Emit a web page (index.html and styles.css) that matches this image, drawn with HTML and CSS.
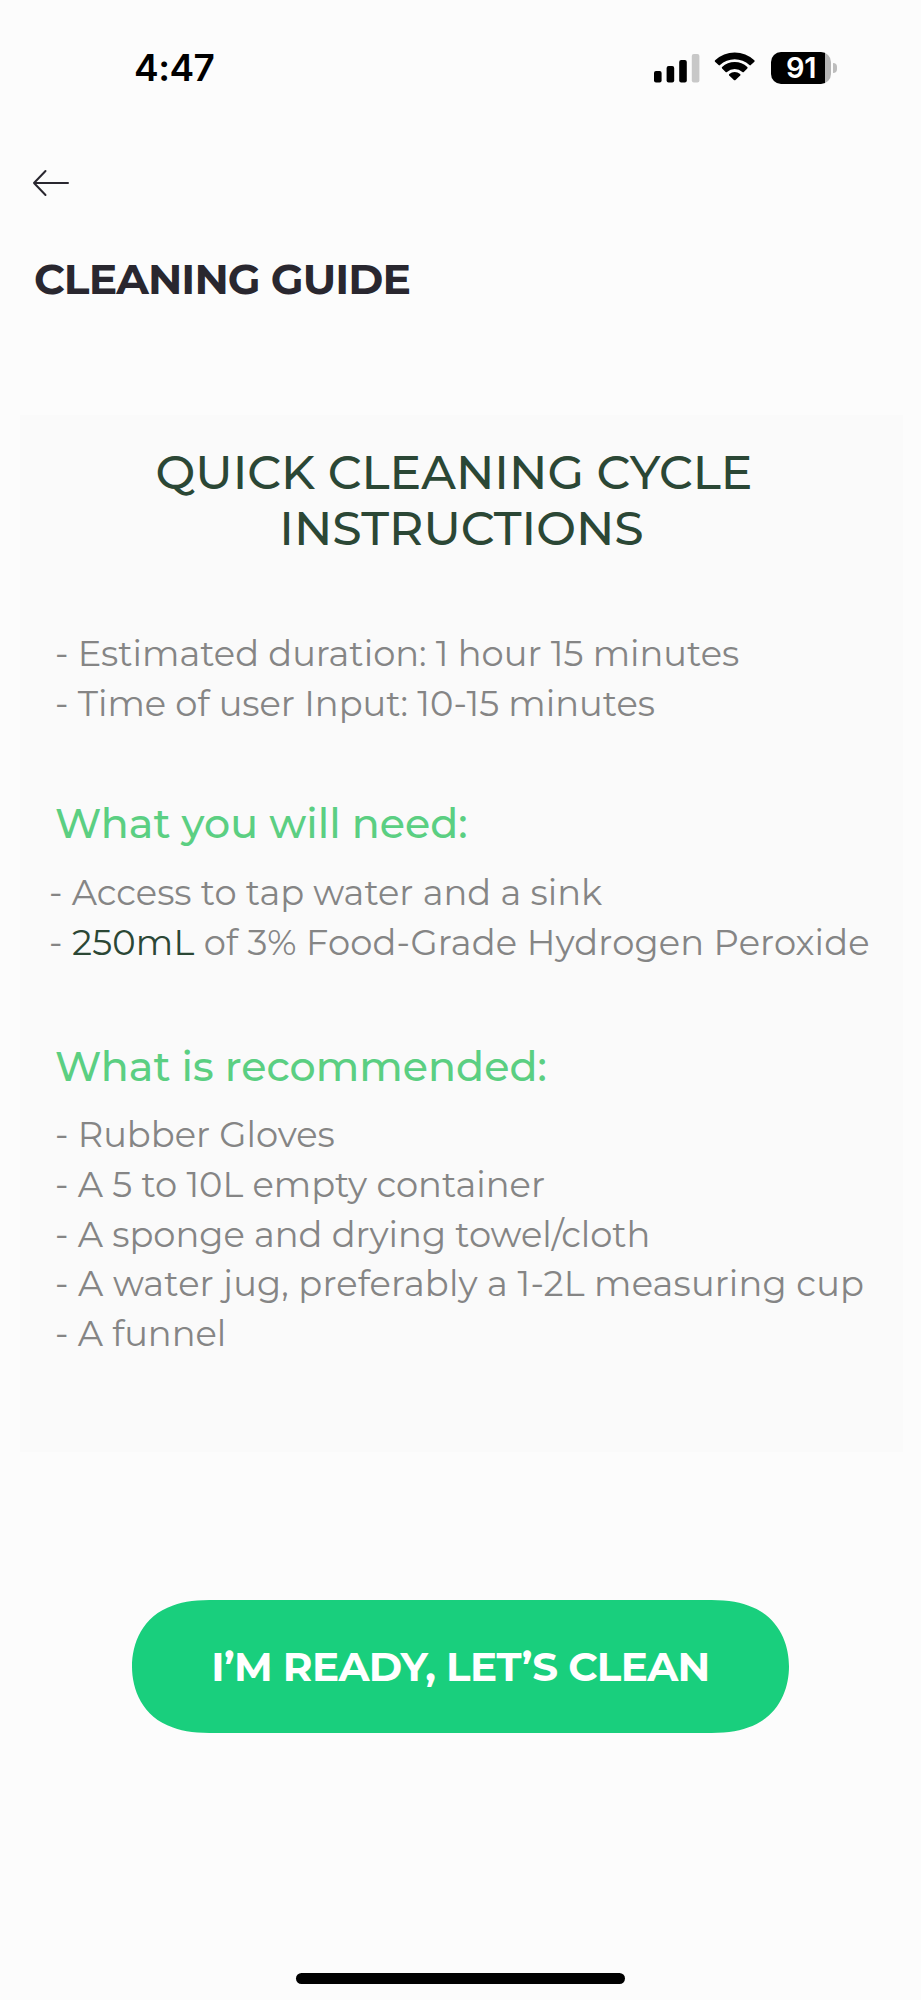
FILE: index.html
```html
<!DOCTYPE html>
<html lang="en">
<head>
    <meta charset="UTF-8">
    <meta name="viewport" content="width=device-width, initial-scale=1.0">
    <title>Cleaning Guide</title>
    <link rel="stylesheet" href="styles.css">
</head>
<body>

<div class="status-bar">
    <span class="time">4:47</span>
    <div class="status-icons">
        <svg class="signal" width="46" height="30" viewBox="0 0 46 30">
            <rect x="0" y="18" width="7.6" height="11.5" rx="2"/>
            <rect x="12.6" y="13" width="7.6" height="16.5" rx="2"/>
            <rect x="25.2" y="7" width="7.6" height="22.5" rx="2"/>
            <rect x="37.8" y="1" width="7.6" height="28.5" rx="2" fill="#c8c8c8"/>
        </svg>
        <svg class="wifi" width="42" height="31" viewBox="0 0 42 31">
            <path d="M1 9.7 Q0.4 9 1.1 8.3 A28.6 28.6 0 0 1 40.3 8.3 Q41 9 40.4 9.7 L36.8 13.1 Q36.1 13.7 35.4 13.1 A21.5 21.5 0 0 0 6 13.1 Q5.3 13.7 4.6 13.1 Z"/>
            <path d="M8.1 16.5 Q7.4 15.8 8.1 15.1 A18.4 18.4 0 0 1 33.3 15.1 Q34 15.8 33.3 16.5 L29.8 19.9 Q29.1 20.5 28.4 19.9 A11.6 11.6 0 0 0 13 19.9 Q12.3 20.5 11.6 19.9 Z"/>
            <path d="M15.2 23.4 Q14.5 22.7 15.3 22 A8.4 8.4 0 0 1 26.1 22 Q26.9 22.7 26.2 23.4 L21.5 28 Q20.7 28.7 19.9 28 Z"/>
        </svg>
        <div class="battery">
            <div class="battery-body">91</div>
            <div class="battery-cap"></div>
        </div>
    </div>
</div>

<header>
    <a href="#" class="back">
        <svg width="38" height="28" viewBox="0 0 38 28" fill="none" stroke="#29272f" stroke-width="2" stroke-linecap="round" stroke-linejoin="round">
            <path d="M36 14H2M13.5 2L2 14L13.5 26"/>
        </svg>
    </a>
    <h1>CLEANING GUIDE</h1>
</header>

<main class="card">
    <h2><span class="first-line">QUICK CLEANING CYCLE</span><br>INSTRUCTIONS</h2>

    <ul class="summary">
        <li>- Estimated duration: 1 hour 15 minutes</li>
        <li>- Time of user Input: 10-15 minutes</li>
    </ul>

    <h3 class="need-title">What you will need:</h3>
    <ul class="need">
        <li>- Access to tap water and a sink</li>
        <li class="wide">- <strong>250mL</strong> of 3% Food-Grade Hydrogen Peroxide</li>
    </ul>

    <h3 class="recommended-title">What is recommended:</h3>
    <ul class="recommended">
        <li>- Rubber Gloves</li>
        <li>- A 5 to 10L empty container</li>
        <li>- A sponge and drying towel/cloth</li>
        <li class="wide">- A water jug, preferably a 1-2L measuring cup</li>
        <li>- A funnel</li>
    </ul>
</main>

<button class="ready-button">
    <svg class="button-shape" width="657" height="133" viewBox="0 0 657 133">
        <path d="M0 66.5C0 44 10 16 41 5.5C52 1 66 0 84 0H573C591 0 605 1 616 5.5C647 16 657 44 657 66.5C657 89 647 117 616 127.5C605 132 591 133 573 133H84C66 133 52 132 41 127.5C10 117 0 89 0 66.5Z"/>
    </svg>
    <span class="button-label">I’M READY, LET’S CLEAN</span>
</button>

<div class="home-indicator"></div>

</body>
</html>
```

FILE: styles.css
```css
* {
    box-sizing: border-box;
}
body {
    font-family: 'Montserrat', 'Inter', sans-serif;
    margin: 0;
    height: 2000px;
    background-color: #fcfcfc;
    display: flex;
    flex-direction: column;
    white-space: nowrap;
}
h1, h2, h3, ul {
    margin: 0;
    padding: 0;
    font-weight: 500;
}
.status-bar {
    height: 135px;
    padding: 0 84px 0 134px;
    display: flex;
    justify-content: space-between;
    align-items: center;
}
.time {
    font-family: 'Inter', sans-serif;
    font-size: 37px;
    font-weight: 600;
    letter-spacing: -0.5px;
}
.status-icons {
    display: flex;
    align-items: center;
}
.wifi {
    margin: 0 15px 0 14px;
}
.battery {
    display: flex;
    align-items: center;
    gap: 2px;
}
.battery-body {
    width: 60px;
    height: 32px;
    border-radius: 10px;
    background: linear-gradient(to right, #000 54px, #b5b5b5 54px);
    color: #fff;
    font: 600 29px/32px 'Inter', sans-serif;
    letter-spacing: -0.3px;
    text-align: center;
}
.battery-cap {
    width: 4px;
    height: 10px;
    border-radius: 0 5px 5px 0;
    background: #bdbdbd;
}
header {
    height: 280px;
    padding: 34px 32px 0;
}
.back {
    display: block;
    height: 28px;
}
.back svg {
    display: block;
}
h1 {
    margin: 57px 0 0 2px;
    color: #29272f;
    font-size: 42.5px;
    font-weight: 700;
    line-height: 50px;
    letter-spacing: -0.9px;
}
.card {
    width: 883px;
    height: 1037px;
    margin-left: 20px;
    padding: 29px 35px 0 35px;
    background: #fafafa;
}
h2 {
    color: #2b4735;
    font-size: 47.3px;
    line-height: 56px;
    text-align: center;
}
.first-line {
    margin-right: 15px;
}
h3 {
    color: #5bcf82;
    font-size: 41.2px;
    line-height: 50px;
}
ul {
    list-style: none;
    color: #858585;
    font-size: 35.25px;
    font-weight: 400;
    line-height: 49.6px;
}
.wide {
    letter-spacing: 0.17px;
}
strong {
    color: #2b4735;
    font-weight: 400;
}
.summary {
    margin-top: 73px;
}
.need-title {
    margin-top: 70px;
}
.need {
    margin: 20px 0 0 -6px;
}
.recommended-title {
    margin-top: 74px;
}
.recommended {
    margin-top: 19px;
}
.ready-button {
    position: relative;
    width: 657px;
    height: 133px;
    margin: 148px 0 0 132px;
    padding: 0;
    border: none;
    background: none;
    color: #fff;
    font-family: inherit;
    font-size: 40.5px;
    font-weight: 700;
    letter-spacing: -0.65px;
    cursor: pointer;
}
.button-shape {
    position: absolute;
    top: 0;
    left: 0;
    fill: #19cf7d;
}
.button-label {
    position: relative;
}
.home-indicator {
    width: 329px;
    height: 11px;
    margin: auto auto 16px;
    border-radius: 6px;
    background: #000;
}
```
